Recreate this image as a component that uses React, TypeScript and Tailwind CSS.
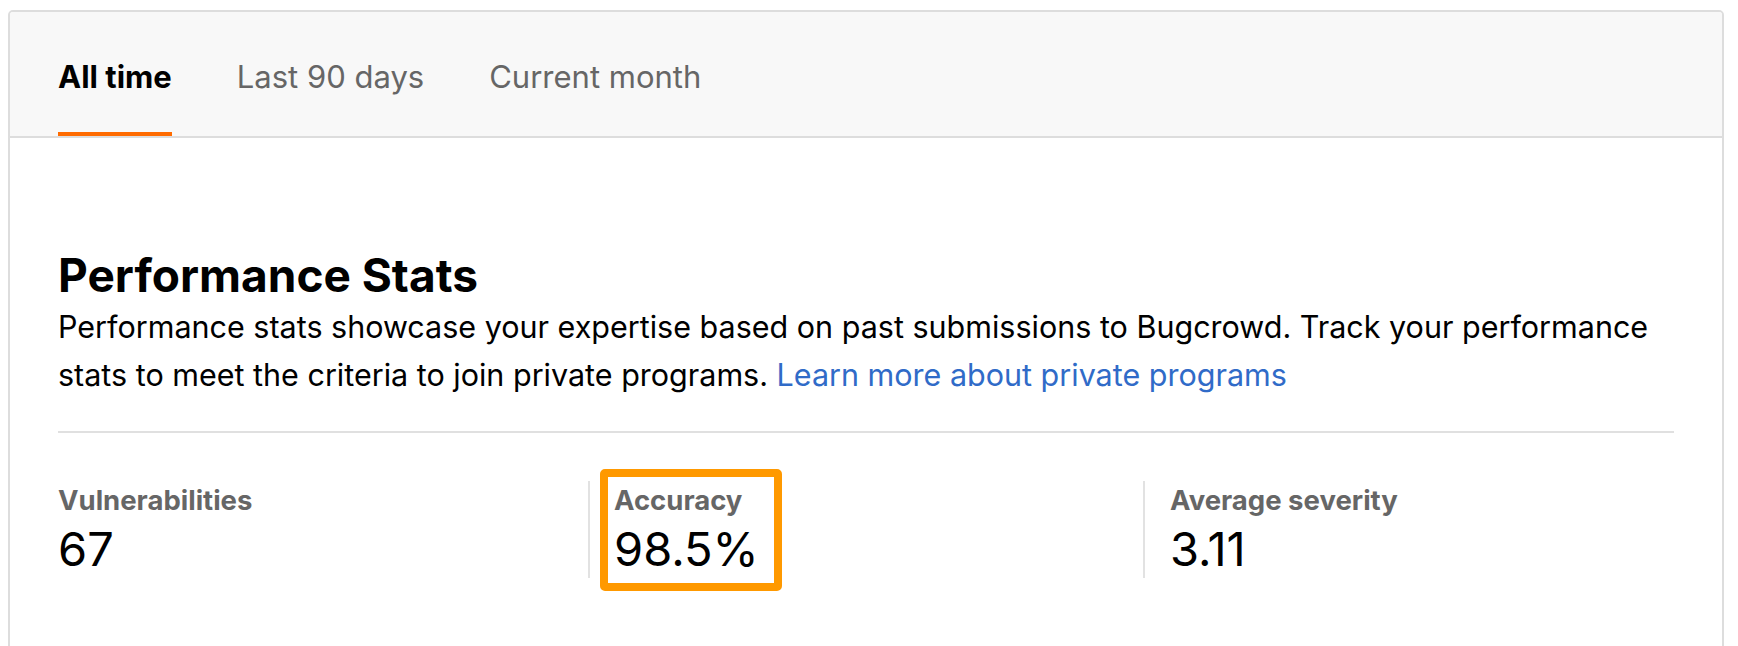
import React from "react"

const tabs = ["All time", "Last 90 days", "Current month"]

const stats = [
  { label: "Vulnerabilities", value: "67" },
  { label: "Accuracy", value: "98.5%" },
  { label: "Average severity", value: "3.11" },
]

const App = () => {
  const active = 0

  return (
    <div className="min-h-screen bg-white pt-[10px] pl-[8px] font-['Inter','Liberation_Sans',sans-serif] text-black">
      <div className="w-[1716px] h-[700px] rounded-t-[5px] border-2 border-[#dddddd] overflow-hidden">
        {/* tabs */}
        <div className="h-[126px] bg-[#f8f8f8] border-b-2 border-[#dddddd] px-[48px] flex gap-[65px]">
          {tabs.map((t, i) => (
            <div
              key={t}
              className={
                i === active
                  ? "h-full flex items-center pt-[10px] border-b-4 border-[#ff6b00] text-[31px] leading-[36px] font-bold text-black"
                  : "h-full flex items-center pt-[10px] border-b-4 border-transparent text-[31px] leading-[36px] text-[#666666]"
              }
            >
              {t}
            </div>
          ))}
        </div>

        {/* body */}
        <div className="px-[48px] pt-[112px]">
          <h2 className="text-[46px] leading-[50px] font-bold">Performance Stats</h2>
          <p className="mt-[3px] text-[30.5px] leading-[48px]">
            Performance stats showcase your expertise based on past submissions to Bugcrowd. Track your performance
            <br />
            stats to meet the criteria to join private programs.{" "}
            <a href="#" className="text-[#306bc8]">
              Learn more about private programs
            </a>
          </p>
          <div className="mt-[32px] h-[2px] bg-[#e0e0e0]" />

          <div className="mt-[48px] flex">
            {stats.map((s, i) => (
              <div
                key={s.label}
                className={
                  i === 0
                    ? "w-[530px] pt-[3px] pb-[1px]"
                    : i === 1
                    ? "relative w-[555px] border-l-2 border-[#e2e2e2] pl-[24px] pt-[3px] pb-[1px]"
                    : "flex-1 border-l-2 border-[#e2e2e2] pl-[25px] pt-[3px] pb-[1px]"
                }
              >
                <div className="text-[27.5px] leading-[32px] font-bold text-[#666666]">{s.label}</div>
                <div className="mt-[5px] text-[47px] leading-[56px]">{s.value}</div>
                {i === 1 && (
                  <span className="absolute left-[10px] top-[-12px] w-[182px] h-[122px] border-[8px] border-[#ff9900] rounded-[5px]" />
                )}
              </div>
            ))}
          </div>
        </div>
      </div>
    </div>
  )
}

export default App
